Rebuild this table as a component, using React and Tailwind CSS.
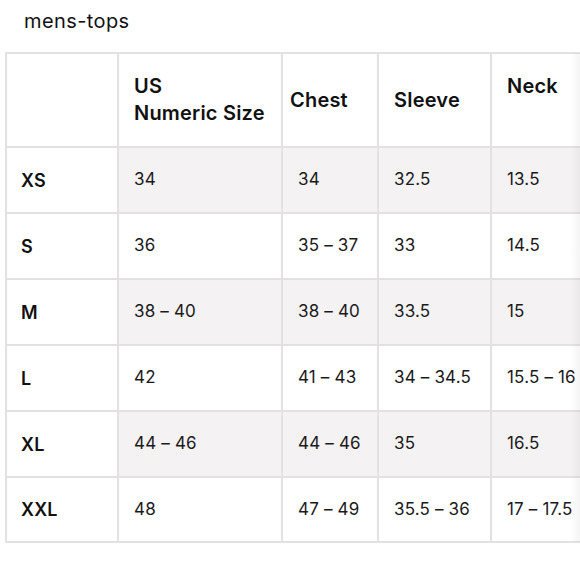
const rows = [
  { size: 'XS', us: '34', chest: '34', sleeve: '32.5', neck: '13.5', shade: true },
  { size: 'S', us: '36', chest: '35 – 37', sleeve: '33', neck: '14.5' },
  { size: 'M', us: '38 – 40', chest: '38 – 40', sleeve: '33.5', neck: '15', shade: true },
  { size: 'L', us: '42', chest: '41 – 43', sleeve: '34 – 34.5', neck: '15.5 – 16' },
  { size: 'XL', us: '44 – 46', chest: '44 – 46', sleeve: '35', neck: '16.5', shade: true },
  { size: 'XXL', us: '48', chest: '47 – 49', sleeve: '35.5 – 36', neck: '17 – 17.5', last: true },
];

export default function App() {
  return (
    <div className="w-[580px] h-[580px] bg-white overflow-hidden relative font-['Inter',sans-serif] text-[#111]">
      {/* titre */}
      <div className="pl-6 pt-[9px] h-[52px] text-[20px] tracking-[0.02em] leading-6">mens-tops</div>

      <div className="pl-[5px]">
        <table className="table-fixed border-collapse w-[606px]">
          <colgroup>
            <col className="w-[112px]" />
            <col className="w-[164px]" />
            <col className="w-[96px]" />
            <col className="w-[113px]" />
            <col className="w-[121px]" />
          </colgroup>
          <thead>
            <tr className="h-[94px]">
              <th className="border-2 border-[#e3e1e2]"></th>
              <th className="border-2 border-[#e3e1e2] text-left align-middle pl-[15px] text-[20px] font-semibold leading-[27px] tracking-[0.01em]">
                US<br />Numeric Size
              </th>
              <th className="border-2 border-[#e3e1e2] text-left align-middle pl-[7px] text-[20px] font-semibold tracking-[0.01em]">Chest</th>
              <th className="border-2 border-[#e3e1e2] text-left align-middle pl-[15px] text-[20px] font-semibold tracking-[0.01em]">Sleeve</th>
              <th className="border-2 border-[#e3e1e2] text-left align-middle pl-[15px] text-[20px] font-semibold leading-[27px] tracking-[0.01em]">
                Neck<br />&nbsp;
              </th>
            </tr>
          </thead>
          <tbody>
            {rows.map((r) => (
              <tr key={r.size} className={`${r.last ? 'h-[65px]' : 'h-[66px]'} text-[17px] tracking-[0.01em] text-[#1a1a1a]`}>
                <td className="border-2 border-[#e3e1e2] pl-[14px] text-[18px] font-semibold text-[#111]">{r.size}</td>
                <td className={`border-2 border-[#e3e1e2] pl-[15px] ${r.shade ? 'bg-[#f4f2f3]' : ''}`}>{r.us}</td>
                <td className={`border-2 border-[#e3e1e2] pl-[15px] ${r.shade ? 'bg-[#f4f2f3]' : ''}`}>{r.chest}</td>
                <td className={`border-2 border-[#e3e1e2] pl-[15px] ${r.shade ? 'bg-[#f4f2f3]' : ''}`}>{r.sleeve}</td>
                <td className={`border-2 border-[#e3e1e2] pl-[15px] whitespace-nowrap ${r.shade ? 'bg-[#f4f2f3]' : ''}`}>{r.neck}</td>
              </tr>
            ))}
          </tbody>
        </table>
      </div>

      {/* ombre de défilement */}
      <div className="absolute right-0 top-[53px] h-[489px] w-[10px] bg-gradient-to-r from-transparent to-black/[0.04]"></div>
    </div>
  );
}
